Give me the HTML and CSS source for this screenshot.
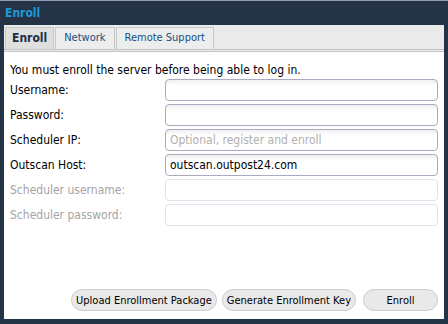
FILE: index.html
```html
<!DOCTYPE html>
<html>
<head>
  <title>Enroll</title>
  <link rel="stylesheet" href="styles.css">
</head>
<body>
  <div class="window">
    <div class="titlebar">Enroll</div>
    <div class="tabs">
      <div class="tab active">Enroll</div>
      <div class="tab">Network</div>
      <div class="tab">Remote Support</div>
    </div>
    <div class="content">
      <p class="intro">You must enroll the server before being able to log in.</p>
      <div class="row">
        <label>Username:</label>
        <input type="text" class="field">
      </div>
      <div class="row">
        <label>Password:</label>
        <input type="password" class="field">
      </div>
      <div class="row">
        <label>Scheduler IP:</label>
        <input type="text" class="field" placeholder="Optional, register and enroll">
      </div>
      <div class="row">
        <label>Outscan Host:</label>
        <input type="text" class="field" value="outscan.outpost24.com">
      </div>
      <div class="row disabled">
        <label>Scheduler username:</label>
        <input type="text" class="field" disabled>
      </div>
      <div class="row disabled">
        <label>Scheduler password:</label>
        <input type="password" class="field" disabled>
      </div>
      <div class="buttons">
        <button class="btn">Upload Enrollment Package</button>
        <button class="btn">Generate Enrollment Key</button>
        <button class="btn enroll">Enroll</button>
      </div>
    </div>
  </div>
</body>
</html>
```

FILE: styles.css
```css
html, body {
  margin: 0;
  padding: 0;
  background-color: #243446;
}

body {
  font-family: "DejaVu Sans Condensed", "DejaVu Sans", sans-serif;
  font-size: 12px;
  color: #000;
}

.window {
  width: 448px;
  height: 324px;
  box-sizing: border-box;
  border-top: 1px solid #8e9bb0;
  padding: 0 4px 5px 4px;
  display: flex;
  flex-direction: column;
}

.titlebar {
  height: 24px;
  line-height: 24px;
  padding-left: 1px;
  font-weight: bold;
  color: #1c9ad8;
}

.tabs {
  display: flex;
  height: 22px;
  padding: 2px 0 0 1px;
  background-color: #e9eae9;
  border-bottom: 3px double #c4c4c4;
}

.tab {
  padding: 0 8px;
  line-height: 20px;
  font-size: 11px;
  color: #1a4d7e;
  border: 1px solid #c9c9c9;
  border-bottom: none;
  margin-right: 1px;
  background-color: #eceded;
}

.tab.active {
  padding: 0 6px;
  font-weight: bold;
  font-size: 12px;
  color: #1d2f45;
  background-color: #dedfde;
}

.content {
  flex: 1;
  background-color: #fff;
  padding: 11px 6px 0 6px;
  display: flex;
  flex-direction: column;
}

.intro {
  margin: 0;
  line-height: 14px;
}

.row {
  display: flex;
  align-items: center;
  height: 25px;
}

.row label {
  width: 155px;
}

.field {
  flex: 1;
  height: 22px;
  box-sizing: border-box;
  border: 1px solid #a9acc0;
  border-radius: 4px;
  padding: 0 4px;
  font-family: inherit;
  font-size: 12px;
  background: linear-gradient(#f0f0f0, #fff 6px);
}

.field::placeholder {
  color: #b0b0b0;
}

.row.disabled label {
  color: #a4a4a4;
}

.row.disabled .field {
  border-color: #e2e3ea;
  background: #fff;
}

.buttons {
  margin-top: auto;
  margin-bottom: 8px;
  display: flex;
  justify-content: flex-end;
  gap: 5px;
}

.btn {
  height: 22px;
  padding: 0 4px;
  border: 1px solid #cdcdcd;
  border-radius: 11px;
  background-color: #e9e9e9;
  font-family: inherit;
  font-size: 11px;
  color: #000;
}

.btn.enroll {
  width: 75px;
  margin-left: 2px;
}
```
